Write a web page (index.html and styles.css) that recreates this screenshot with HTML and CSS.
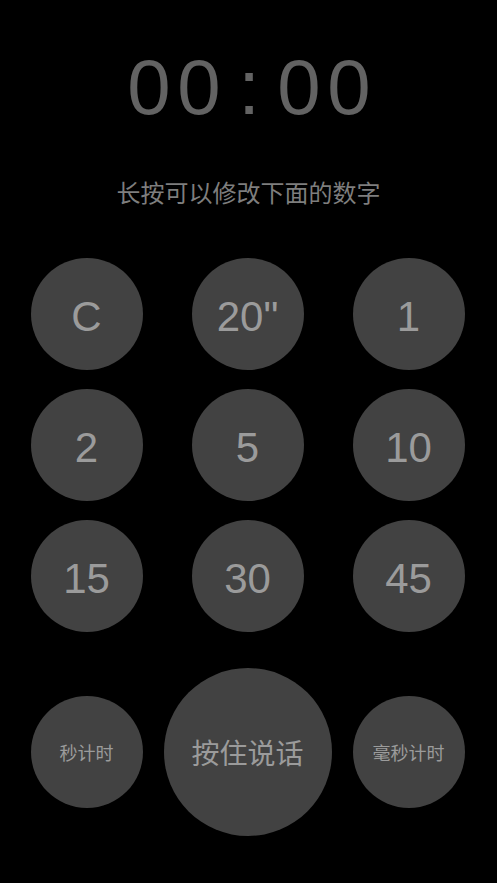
FILE: index.html
```html
<!DOCTYPE html>
<html lang="zh">
<head>
<meta charset="utf-8">
<link rel="stylesheet" href="styles.css">
</head>
<body>
<div class="app">
  <div class="timer">
    <span class="cell">0</span><span class="cell">0</span><span class="cell">:</span><span class="cell">0</span><span class="cell">0</span>
  </div>
  <div class="hint">长按可以修改下面的数字</div>
  <div class="pad">
    <div class="key">C</div>
    <div class="key">20"</div>
    <div class="key">1</div>
    <div class="key">2</div>
    <div class="key">5</div>
    <div class="key">10</div>
    <div class="key">15</div>
    <div class="key">30</div>
    <div class="key">45</div>
  </div>
  <div class="actions">
    <div class="act small">秒计时</div>
    <div class="act big">按住说话</div>
    <div class="act small">毫秒计时</div>
  </div>
</div>
</body>
</html>
```
FILE: styles.css
```css
html, body {
  margin: 0;
  padding: 0;
  background: #000;
}
.app {
  width: 497px;
  height: 883px;
  background: #000;
  font-family: "Liberation Sans", "Noto Sans CJK SC", sans-serif;
  overflow: hidden;
}
.timer {
  display: flex;
  justify-content: center;
  padding-top: 48px;
  padding-left: 1px;
  font-size: 78px;
  line-height: 78px;
  height: 78px;
  color: #636363;
}
.cell {
  width: 50px;
  text-align: center;
}
.hint {
  margin-top: 54px;
  text-align: center;
  font-family: "Noto Sans CJK SC", sans-serif;
  font-size: 24px;
  line-height: 24px;
  color: #7e7e7e;
}
.pad {
  margin-top: 54px;
  display: grid;
  grid-template-columns: repeat(3, 112px);
  grid-auto-rows: 112px;
  column-gap: 49px;
  row-gap: 19px;
  justify-content: center;
  padding-right: 2px;
}
.key {
  border-radius: 50%;
  background: #424242;
  color: #9b9b9b;
  font-size: 42px;
  line-height: 1;
  display: flex;
  align-items: center;
  justify-content: center;
  padding-top: 5px;
  box-sizing: border-box;
}
.actions {
  margin-top: 36px;
  display: flex;
  align-items: center;
  justify-content: center;
  gap: 21px;
  padding-right: 2px;
}
.act {
  border-radius: 50%;
  background: #424242;
  color: #9b9b9b;
  font-family: "Noto Sans CJK SC", sans-serif;
  display: flex;
  align-items: center;
  justify-content: center;
}
.small {
  width: 112px;
  height: 112px;
  font-size: 18px;
}
.big {
  width: 168px;
  height: 168px;
  font-size: 28px;
}
```
